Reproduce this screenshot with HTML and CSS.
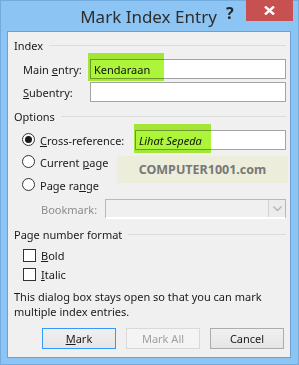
FILE: index.html
```html
<!DOCTYPE html>
<html lang="en">
<head>
  <meta charset="UTF-8">
  <title>Mark Index Entry</title>
  <link rel="stylesheet" href="styles.css">
</head>
<body>
  <div class="window">
    <div class="titlebar">
      <span class="title">Mark Index Entry</span>
      <span class="help">?</span>
      <span class="close">
        <svg width="11" height="9" viewBox="0 0 11 9"><path d="M1 0.5 L10 8.5 M10 0.5 L1 8.5" stroke="#fff" stroke-width="2.4"/></svg>
      </span>
    </div>

    <div class="client">
      <!-- Index -->
      <div class="legend"><span>Index</span><i class="rule"></i></div>
      <div class="row entry first">
        <label>Main <u>e</u>ntry:</label>
        <div class="field"><b class="mark"></b><span class="value">Kendaraan</span></div>
      </div>
      <div class="row entry sub">
        <label><u>S</u>ubentry:</label>
        <div class="field"></div>
      </div>

      <!-- Options -->
      <div class="legend options"><span>Options</span><i class="rule"></i></div>
      <div class="row opt cross">
        <span class="radio on"></span>
        <label class="cross-label"><u>C</u>ross-reference:</label>
        <div class="field"><b class="mark mark2"></b><span class="value italic">Lihat Sepeda</span></div>
      </div>
      <div class="row opt current">
        <span class="radio"></span>
        <label>Current <u>p</u>age</label>
      </div>
      <div class="row opt range">
        <span class="radio"></span>
        <label>Page ra<u>n</u>ge</label>
      </div>
      <div class="row bookmark">
        <label>Bookmark:</label>
        <div class="select">
          <span class="arrow"><svg width="9" height="6" viewBox="0 0 9 6"><path d="M0.5 0.5 L4.5 4.5 L8.5 0.5" fill="none" stroke="#b4b4b4" stroke-width="1.4"/></svg></span>
        </div>
      </div>
      <div class="watermark">COMPUTER1001.com</div>

      <!-- Page number format -->
      <div class="legend format"><span>Page number format</span><i class="rule"></i></div>
      <div class="row check bold">
        <span class="box"></span><label><u>B</u>old</label>
      </div>
      <div class="row check italic-row">
        <span class="box"></span><label><u>I</u>talic</label>
      </div>

      <p class="note">This dialog box stays open so that you can mark multiple index entries.</p>

      <div class="buttons">
        <button class="btn default"><u>M</u>ark</button>
        <button class="btn" disabled>Mark All</button>
        <button class="btn">Cancel</button>
      </div>
    </div>
  </div>
</body>
</html>
```

FILE: styles.css
```css
body {
  margin: 0;
  font-family: "Noto Sans", sans-serif;
  font-size: 11px;
  color: #1a1a1a;
}
.window {
  width: 299px;
  height: 365px;
  box-sizing: border-box;
  background: #8cc4f4;
  border: 1px solid #72abde;
  display: flex;
  flex-direction: column;
}
.titlebar {
  height: 30px;
  position: relative;
  display: flex;
  justify-content: center;
  align-items: center;
}
.title {
  font-size: 17px;
  color: #2e2e2e;
  margin-left: -2px;
}
.help {
  position: absolute;
  left: 225px;
  top: 1px;
  font-size: 16px;
  font-weight: bold;
  color: #262626;
}
.close {
  position: absolute;
  right: 5px;
  top: -1px;
  width: 47px;
  height: 21px;
  background: #c75050;
  display: flex;
  justify-content: center;
  align-items: center;
}
.client {
  flex: 1;
  margin: 0 7px 6px 6px;
  background: #f0f0f0;
  border: 1px solid #6f9fcf;
  padding: 0 4px 0 6px;
  position: relative;
}
.legend {
  display: flex;
  align-items: center;
  height: 16px;
  margin-top: 5px;
}
.legend .rule {
  flex: 1;
  border-top: 1px solid #dcdcdc;
  margin-left: 6px;
}
.legend.options { margin-top: 6px; }
.legend.format { margin-top: 7px; }

.row {
  display: flex;
  align-items: center;
  height: 20px;
}
.entry { padding-left: 9px; }
.entry label { width: 67px; }
.entry.first { margin-top: 6px; }
.entry.sub { margin-top: 3px; }

.field {
  flex: 1;
  height: 20px;
  box-sizing: border-box;
  border: 1px solid #a3a3a3;
  background: #fff;
  position: relative;
  display: flex;
  align-items: center;
}
.field .value {
  position: relative;
  padding-left: 3px;
  color: #111;
}
.field .italic { font-style: italic; }
.mark {
  position: absolute;
  left: -3px;
  top: -7px;
  width: 76px;
  height: 28px;
  background: #adf53a;
  mix-blend-mode: multiply;
}
.mark2 {
  left: -2px;
  top: -7px;
  width: 77px;
  height: 29px;
}

.opt { padding-left: 8px; }
.opt label { margin-left: 5px; }
.cross { margin-top: 6px; }
.cross .cross-label { width: 95px; }
.current { margin-top: 2px; }
.range { margin-top: 3px; }
.radio {
  width: 13px;
  height: 13px;
  box-sizing: border-box;
  border: 1px solid #333;
  border-radius: 50%;
  background: #fff;
  display: flex;
  justify-content: center;
  align-items: center;
  margin-top: -2px;
}
.radio.on::after {
  content: "";
  width: 7px;
  height: 7px;
  border-radius: 50%;
  background: #1a1a1a;
}

.bookmark {
  margin-top: 4px;
  padding-left: 27px;
}
.bookmark label {
  width: 64px;
  color: #8c8c8c;
}
.select {
  flex: 1;
  height: 20px;
  box-sizing: border-box;
  border: 1px solid #b9b9b9;
  background: #f0f0f0;
  border-bottom: 2px solid #fff;
  display: flex;
  justify-content: flex-end;
}
.arrow {
  width: 16px;
  border-left: 1px solid #d2d2d2;
  display: flex;
  justify-content: center;
  align-items: center;
  background: #ececec;
}

.watermark {
  position: absolute;
  left: 109px;
  top: 124px;
  width: 171px;
  height: 27px;
  background: #ededdb;
  color: #777;
  font-weight: bold;
  font-size: 12.5px;
  display: flex;
  justify-content: center;
  align-items: center;
}

.check {
  height: 18px;
  padding-left: 9px;
}
.check.bold { margin-top: 4px; }
.check.italic-row { margin-top: 1px; }
.box {
  width: 13px;
  height: 13px;
  box-sizing: border-box;
  border: 1px solid #333;
  background: #fff;
}
.check label { margin-left: 5px; }

.note {
  margin: 6px 0 0 0;
  line-height: 15px;
  color: #1a1a1a;
}

.buttons {
  display: flex;
  justify-content: flex-end;
  gap: 10px;
  margin-top: 9px;
  padding-right: 2px;
}
.btn {
  width: 74px;
  height: 21px;
  font-family: "Noto Sans", sans-serif;
  font-size: 11px;
  color: #1a1a1a;
  border: 1px solid #acacac;
  background: linear-gradient(#f0f0f0, #e5e5e5);
  padding: 0;
}
.btn.default { border-color: #3399ff; }
.btn:disabled {
  color: #a0a0a0;
  border-color: #d9d9d9;
  background: #f4f4f4;
}
```
